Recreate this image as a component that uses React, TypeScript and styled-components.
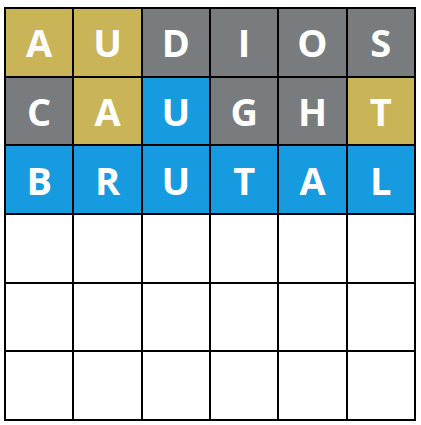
import React from "react";
import styled, { createGlobalStyle } from "styled-components";

const GlobalStyle = createGlobalStyle`
  body {
    margin: 0;
    background: #fff;
    font-family: "Open Sans", "Liberation Sans", sans-serif;
  }
`;

type Mark = "near" | "miss" | "won" | "empty";

const colors: Record<Mark, string> = {
  near: "#c9b458",
  miss: "#787c7e",
  won: "#169be0",
  empty: "#fff",
};

const Page = styled.div`
  padding: 7px 0 0 4px;
`;

const Board = styled.div`
  width: 412px;
  height: 414px;
  box-sizing: border-box;
  display: grid;
  grid-template-columns: repeat(6, 1fr);
  grid-template-rows: repeat(6, 1fr);
  gap: 2px;
  padding: 2px;
  background: #000;
`;

const Tile = styled.div<{ $mark: Mark }>`
  display: flex;
  align-items: center;
  justify-content: center;
  background: ${(p) => colors[p.$mark]};
  color: #fff;
  font-size: 38px;
  font-weight: 700;
  line-height: 1;
`;

const rows: [string, Mark[]][] = [
  ["AUDIOS", ["near", "near", "miss", "miss", "miss", "miss"]],
  ["CAUGHT", ["miss", "near", "won", "miss", "miss", "near"]],
  ["BRUTAL", ["won", "won", "won", "won", "won", "won"]],
  ["      ", Array(6).fill("empty")],
  ["      ", Array(6).fill("empty")],
  ["      ", Array(6).fill("empty")],
];

export default function App() {
  return (
    <Page>
      <GlobalStyle />
      <Board>
        {rows.map(([word, marks], r) =>
          word.split("").map((ch, c) => (
            <Tile key={`${r}-${c}`} $mark={marks[c]}>
              {ch.trim()}
            </Tile>
          ))
        )}
      </Board>
    </Page>
  );
}
